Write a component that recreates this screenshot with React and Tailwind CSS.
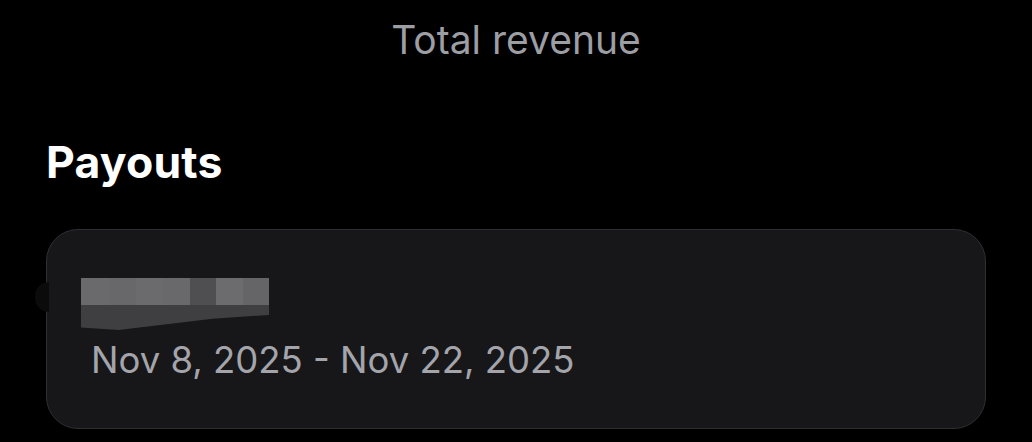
import React from 'react';

const font = { fontFamily: 'Inter, "Noto Sans", sans-serif' };

// pixelated redaction over the payout amount
const Redacted = () => (
  <div className="relative w-[188px] h-[52px]">
    <div className="flex h-[27px]">
      <div className="w-[28px] bg-[#6a6a6c]" />
      <div className="w-[27px] bg-[#68686a]" />
      <div className="w-[27px] bg-[#6b6b6d]" />
      <div className="w-[27px] bg-[#69696b]" />
      <div className="w-[26px] bg-[#4f4f51]" />
      <div className="w-[27px] bg-[#6c6c6e]" />
      <div className="w-[26px] bg-[#656567]" />
    </div>
    <div className="h-[25px] bg-[#3f3f42] [clip-path:polygon(0_0,100%_0,100%_40%,70%_55%,20%_100%,0_90%)]" />
  </div>
);

export default function App() {
  return (
    <div className="w-[1032px] h-[442px] bg-black overflow-hidden" style={font}>
      <div className="pt-[16px] text-center text-[39px] leading-[48px] text-[#9c9ea4]">Total revenue</div>
      <div className="mt-[72px] px-[46px] text-[44.5px] leading-[52px] font-bold text-white tracking-[0.2px]">Payouts</div>
      <div className="mx-[46px] mt-[41px] h-[200px] rounded-[32px] border border-[#2e2f33] bg-[#17171a] relative">
        <div className="absolute left-[-12px] top-[52px] w-[14px] h-[30px] rounded-l-full bg-[#0b0b0c]" />
        <div className="pl-[34px] pt-[48px]">
          <Redacted />
          <div className="pl-[10px] mt-[8px] text-[36.5px] leading-[44px] text-[#a3a5ab]">Nov 8, 2025 - Nov 22, 2025</div>
        </div>
      </div>
    </div>
  );
}
